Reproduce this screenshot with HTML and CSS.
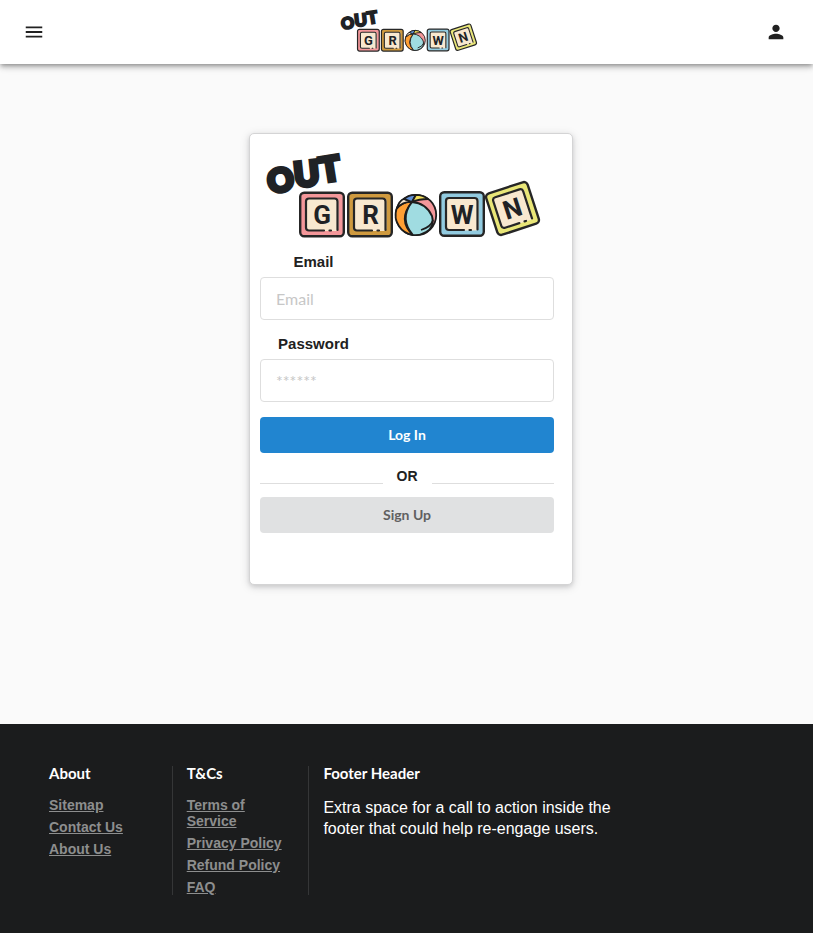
FILE: index.html
```html
<!DOCTYPE html>
<html lang="en">
<head>
<meta charset="utf-8">
<meta name="viewport" content="width=device-width, initial-scale=1">
<title>Outgrown</title>
<link rel="stylesheet" href="styles.css">
</head>
<body>
<header class="topbar">
  <button class="icon-button" type="button" aria-label="Menu">
    <svg viewBox="0 0 24 24"><path d="M3 18h18v-2H3v2zm0-5h18v-2H3v2zm0-7v2h18V6H3z"/></svg>
  </button>
  <a class="brand" href="#" aria-label="Outgrown"><svg class="brand-logo" viewBox="0 0 277 90"><use href="#logo"/></svg></a>
  <button class="icon-button account" type="button" aria-label="Account">
    <svg viewBox="0 0 24 24"><path d="M12 12c2.210 0 4-1.790 4-4s-1.790-4-4-4-4 1.790-4 4 1.790 4 4 4zm0 2c-2.670 0-8 1.340-8 4v2h16v-2c0-2.660-5.330-4-8-4z"/></svg>
  </button>
</header>

<main class="page">
  <form class="card">
    <svg class="card-logo" viewBox="0 0 277 90">
      <defs>
        <g id="block">
          <rect x="1.2" y="1.2" width="43.6" height="43.6" rx="4" fill="currentColor" stroke="#262626" stroke-width="2.4"/>
          <rect x="6.5" y="6.5" width="33" height="33" rx="3" fill="#f8e8cf"/>
          <path d="M38.500 38.500V10q0-3-3-3H10Q7 7 7 10v26q0 3 3 3H25M30.500 39h1.500" fill="none" stroke="#262626" stroke-width="2.200" stroke-linecap="round"/>
        </g>
      </defs>
      <g id="logo">
        <text class="out" font-size="32" transform="translate(15.500 30) rotate(-10)" y="11.500">O</text>
        <text class="out" font-size="34" transform="translate(41.500 24) rotate(-6)" y="12">U</text>
        <text class="out" font-size="34" transform="translate(65 19) rotate(-9)" y="12">T</text>
        <use href="#block" class="pink" x="34" y="41.500"/>
        <use href="#block" class="gold" x="82" y="41.500"/>
        <use href="#block" class="blue" x="174" y="41"/>
        <g transform="translate(247.500 58.500) rotate(-18)">
          <use href="#block" class="yellow" x="-23" y="-23"/>
          <text class="letter" y="9">N</text>
        </g>
        <text class="letter" x="57" y="74">G</text>
        <text class="letter" x="105.500" y="74">R</text>
        <text class="letter" x="197" y="74">W</text>
        <g stroke="#1d1d1d" stroke-width="1.800" stroke-linejoin="round">
          <circle cx="151" cy="65" r="20.200" fill="#f4979a"/>
          <path d="M147 52Q138 51 131.500 59A20.200 20.200 0 0 0 148 85Q132 70 147 52Z" fill="#ff9f33"/>
          <path d="M147 52Q139 51 132 58 134 51 139 48.800Z" fill="#f8e8cf"/>
          <path d="M147 52L139 48.800Q144 44.500 151 44.800Z" fill="#5f8fd6"/>
          <path d="M147 52L151 44.800Q158 45 163 49Q154 49 147 52Z" fill="#f2df5c"/>
          <path d="M147 52Q161 53 167 66Q170 77 161 82Q154 86 148 85Q134 69 147 52Z" fill="#a0dce1"/>
          <path d="M156 80Q166 77 168 70" fill="none"/>
        </g>
      </g>
    </svg>
    <div class="field">
      <label for="email">Email</label>
      <input id="email" type="email" placeholder="Email">
    </div>
    <div class="field">
      <label for="password">Password</label>
      <input id="password" type="password" placeholder="******">
    </div>
    <button class="button primary" type="submit">Log In</button>
    <div class="divider"><span>OR</span></div>
    <button class="button" type="button">Sign Up</button>
  </form>
</main>

<footer class="footer">
  <div class="columns">
    <section class="column">
      <h2>About</h2>
      <ul>
        <li><a href="#">Sitemap</a></li>
        <li><a href="#">Contact Us</a></li>
        <li><a href="#">About Us</a></li>
      </ul>
    </section>
    <section class="column">
      <h2>T&amp;Cs</h2>
      <ul>
        <li><a href="#">Terms of Service</a></li>
        <li><a href="#">Privacy Policy</a></li>
        <li><a href="#">Refund Policy</a></li>
        <li><a href="#">FAQ</a></li>
      </ul>
    </section>
    <section class="column">
      <h2>Footer Header</h2>
      <p>Extra space for a call to action inside the footer that could help re-engage users.</p>
    </section>
  </div>
</footer>
</body>
</html>
```
FILE: styles.css
```css
* { box-sizing: border-box; }

body {
  margin: 0;
  min-height: 100vh;
  display: flex;
  flex-direction: column;
  background: #fafafa;
  color: #212121;
  font-family: "Liberation Sans", Arial, sans-serif;
  font-size: 15px;
}

/* Logo */
.out {
  font-family: Lato, sans-serif;
  font-weight: 900;
  text-anchor: middle;
  fill: #202225;
  stroke: #202225;
  stroke-width: 4px;
}
.letter {
  font: 700 26px Roboto, sans-serif;
  text-anchor: middle;
  fill: #202225;
}
.pink { color: #f4979a; }
.gold { color: #cf9a3f; }
.blue { color: #92cbe0; }
.yellow { color: #e9e678; }

/* Top bar */
.topbar {
  display: grid;
  grid-template-columns: 1fr auto 1fr;
  align-items: center;
  height: 64px;
  padding: 0 26px 0 23px;
  background: #fff;
  box-shadow: 0 2px 4px -1px rgba(0, 0, 0, .3), 0 4px 5px rgba(0, 0, 0, .14), 0 1px 10px rgba(0, 0, 0, .12);
  position: relative;
}
.icon-button {
  display: flex;
  justify-self: start;
  padding: 0;
  border: 0;
  background: none;
  cursor: pointer;
}
.icon-button svg { width: 22px; height: 22px; fill: #212121; }
.account { justify-self: end; }
.brand { padding: 0 0 3px 8px; }
.brand-logo { display: block; width: 138px; height: 45px; overflow: visible; }

/* Log in card */
.page {
  flex: 1;
  display: flex;
  justify-content: center;
  align-items: flex-start;
  padding: 69px 0 64px 9px;
}
.card {
  width: 100%;
  max-width: 324px;
  padding: 16px 18px 51px 10px;
  background: #fff;
  border: 1px solid #d4d4d5;
  border-radius: 5px;
  box-shadow: 0 2px 4px rgba(34, 36, 38, .12), 0 2px 10px rgba(34, 36, 38, .15);
}
.card-logo {
  display: block;
  width: 277px;
  max-width: 100%;
  height: 90px;
  margin: 0 auto 13px 5px;
  overflow: visible;
}
.field { margin-bottom: 15px; }
.field label {
  display: block;
  width: 107px;
  margin-bottom: 6px;
  line-height: 18px;
  font-weight: 700;
  text-align: center;
}
.field input {
  display: block;
  width: 100%;
  height: 43px;
  padding: 0 15px;
  border: 1px solid #dedede;
  border-radius: 4px;
  background: #fff;
  font: 16px Lato, sans-serif;
}
.field input::placeholder { color: #c7c7c7; opacity: 1; }
.button {
  display: block;
  width: 100%;
  height: 36px;
  padding: 0 0 2px;
  border: 0;
  border-radius: 4px;
  background: #e0e1e2;
  color: #606060;
  font: 700 14px Lato, sans-serif;
  cursor: pointer;
}
.primary { background: #2185d0; color: #fff; }
.divider {
  display: flex;
  align-items: flex-end;
  gap: 14px;
  height: 31px;
  margin-bottom: 13px;
  font-size: 14px;
  font-weight: 700;
  line-height: 16px;
}
.divider::before,
.divider::after { content: ""; flex: 1; border-top: 1px solid #dedede; }

/* Footer */
.footer {
  padding: 42px 49px 38px 35px;
  background: #1b1c1d;
  color: #fff;
}
.columns { display: grid; grid-template-columns: 3fr 3fr 7fr 3fr; }
.column { min-height: 129px; padding: 0 14px; }
.column + .column { border-left: 1px solid #353637; }
.column h2 {
  margin: 0 0 17px;
  font: 700 15px/14px Lato, sans-serif;
}
.column ul { margin: 0; padding: 0; list-style: none; }
.column li { margin-bottom: 6px; font-size: 14px; font-weight: 700; line-height: 16px; }
.column li:last-child { margin-bottom: 0; }
.column a { color: #8d8e8e; }
.column p { margin: 0; font-size: 16px; line-height: 21px; }
```
